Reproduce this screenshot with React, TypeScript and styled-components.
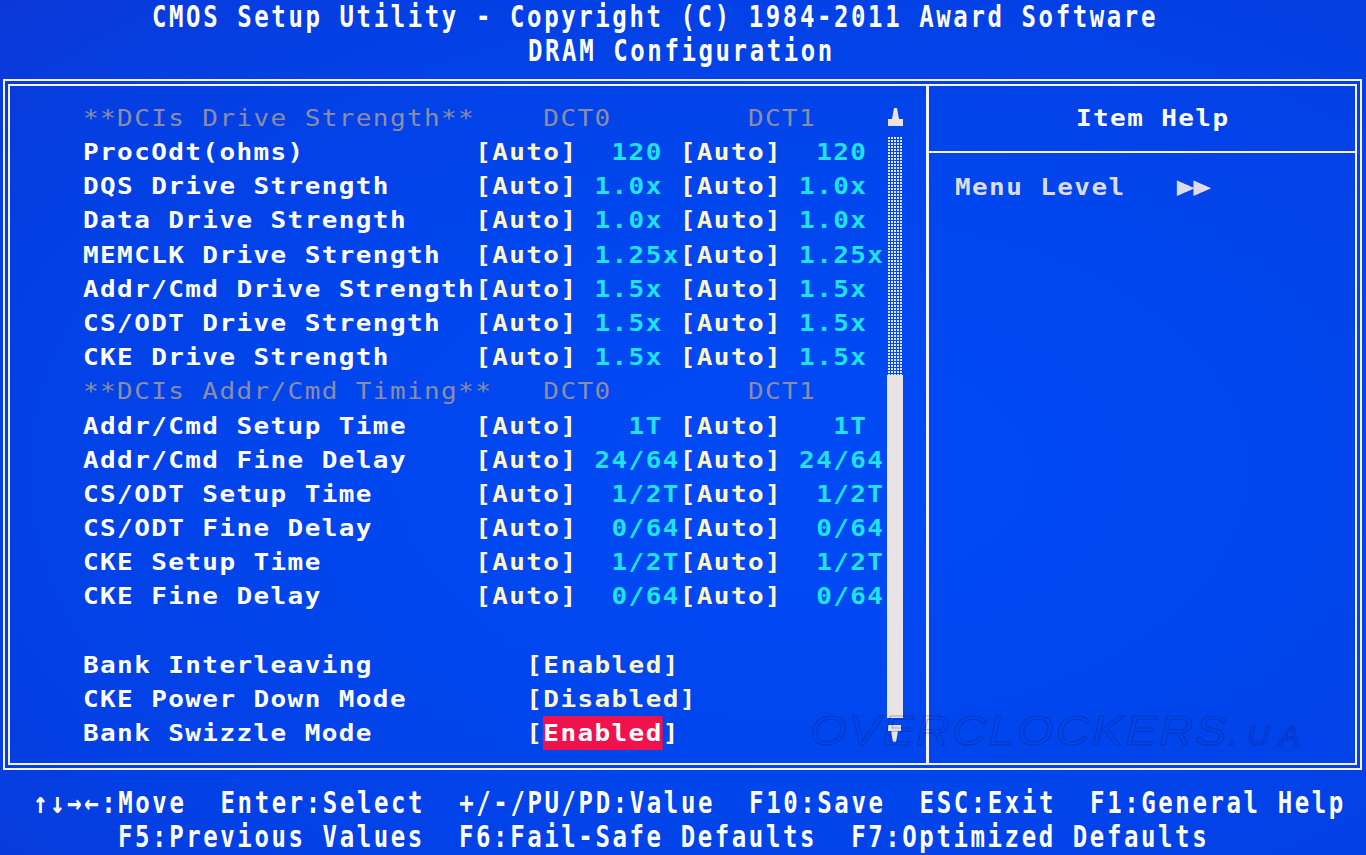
import React from 'react';
import styled, { createGlobalStyle } from 'styled-components';

const CELL = 17.05;
const ROW = 34.2;
const ADV = 0.60205;

const Global = createGlobalStyle`
  html, body {
    margin: 0;
    padding: 0;
    width: 1366px;
    height: 855px;
    overflow: hidden;
    background: #0a40e4;
  }
  #root { width: 1366px; height: 855px; }
`;

const Screen = styled.div`
  position: relative;
  width: 1366px;
  height: 855px;
  overflow: hidden;
  display: flex;
  flex-direction: column;
  font-family: "DejaVu Sans Mono", "Liberation Mono", monospace;
  background: radial-gradient(
    ellipse 85% 80% at 60% 55%,
    #004af6 0%,
    #0046ee 40%,
    #0340e4 75%,
    #0c38d8 100%
  );
`;

const Header = styled.div`
  display: flex;
  flex-direction: column;
`;

const Line = styled.div<{ $indent: number }>`
  flex: none;
  height: ${ROW}px;
  line-height: ${ROW}px;
  padding-left: ${(p) => p.$indent}px;
  white-space: pre;
`;

const Glyphs = styled.span<{ $size: number; $sx: number }>`
  display: inline-block;
  vertical-align: top;
  height: ${ROW}px;
  line-height: ${ROW}px;
  font-size: ${(p) => p.$size}px;
  font-weight: 700;
  letter-spacing: ${(p) => CELL / p.$sx - ADV * p.$size}px;
  transform: scaleX(${(p) => p.$sx});
  transform-origin: 0 50%;
  color: #ffffff;
`;

const TitleText = (props: { children: React.ReactNode }) => (
  <Glyphs $size={30} $sx={0.8}>{props.children}</Glyphs>
);

const ItemText = (props: { children: React.ReactNode }) => (
  <Glyphs $size={23} $sx={1.13}>{props.children}</Glyphs>
);

const Frame = styled.div`
  margin: 10.6px 0 0 3px;
  width: 1359px;
  box-sizing: border-box;
  border: 2px solid #f6f2fa;
  padding: 3px;
  flex: none;
`;

const Inner = styled.div`
  border: 2px solid #f6f2fa;
  height: 677px;
  display: flex;
`;

const LeftPanel = styled.div`
  flex: 0 0 919px;
  border-right: 3px solid #f6f2fa;
  display: flex;
  align-items: flex-start;
  padding-left: 73px;
  box-sizing: border-box;
`;

const ItemList = styled.div`
  width: 804px;
  padding-top: 14.9px;
  display: flex;
  flex-direction: column;
`;

const Label = styled.span`
  color: #ffffff;
`;
const Option = styled.span`
  color: #fff6c4;
`;
const Value = styled.span`
  color: #1ee2ee;
`;
const Dim = styled.span`
  color: #8c8ca8;
  font-weight: 400;
`;
const Selected = styled.span`
  display: inline-block;
  vertical-align: top;
  height: ${ROW}px;
  background: #f0124c;
  color: #ffffff;
`;
const HelpText = styled.span`
  color: #dcdce6;
`;
const HelpArrows = styled.span`
  color: #dcdce6;
  font-size: 26px;
  letter-spacing: -1px;
`;

const ScrollBar = styled.div`
  width: 16px;
  margin-top: 22px;
  display: flex;
  flex-direction: column;
  align-items: flex-start;
`;

const ArrowBox = styled.svg`
  display: block;
  margin-left: 1px;
  flex: none;
`;

const Track = styled.div`
  margin-top: 11px;
  width: 15px;
  height: 238px;
  margin-left: 1px;
  background-image: radial-gradient(circle at 1px 1px, rgba(236, 236, 255, 0.95) 0.9px, transparent 1.3px);
  background-size: 3px 3px;
`;

const Thumb = styled.div`
  width: 16px;
  height: 343px;
  background: #e9e3e6;
`;

const DownWrap = styled.div`
  margin-top: 7px;
`;

const RightPanel = styled.div`
  flex: 1;
  display: flex;
  flex-direction: column;
`;

const HelpHeader = styled.div`
  height: 65px;
  border-bottom: 2px solid #f6f2fa;
  display: flex;
  align-items: center;
`;

const HelpBody = styled.div`
  margin-top: 16px;
`;

const Footer = styled.div`
  margin-top: 15.9px;
  display: flex;
  flex-direction: column;
`;

const Watermark = styled.div`
  position: absolute;
  left: 810px;
  top: 709px;
  font-family: "Liberation Sans", Arial, sans-serif;
  font-style: italic;
  font-weight: 400;
  font-size: 42px;
  line-height: 44px;
  letter-spacing: 2px;
  color: transparent;
  -webkit-text-stroke: 1px rgba(4, 22, 120, 0.35);
  transform: scaleX(1.12);
  transform-origin: left top;
  white-space: nowrap;
  pointer-events: none;
`;

const WatermarkSmall = styled.span`
  font-size: 27px;
  letter-spacing: 9px;
`;

type Kind = 'l' | 'o' | 'v' | 'd' | 's';
type Seg = [string, Kind];

const auto = (label: string, v1: string, v2: string): Seg[] => [
  [label.padEnd(23), 'l'],
  ['[Auto]', 'o'],
  [v1, 'v'],
  ['[Auto]', 'o'],
  [v2, 'v'],
];

const rows: Seg[][] = [
  [['**DCIs Drive Strength**    DCT0        DCT1', 'd']],
  auto('ProcOdt(ohms)', '  120 ', '  120'),
  auto('DQS Drive Strength', ' 1.0x ', ' 1.0x'),
  auto('Data Drive Strength', ' 1.0x ', ' 1.0x'),
  auto('MEMCLK Drive Strength', ' 1.25x', ' 1.25x'),
  auto('Addr/Cmd Drive Strength', ' 1.5x ', ' 1.5x'),
  auto('CS/ODT Drive Strength', ' 1.5x ', ' 1.5x'),
  auto('CKE Drive Strength', ' 1.5x ', ' 1.5x'),
  [['**DCIs Addr/Cmd Timing**   DCT0        DCT1', 'd']],
  auto('Addr/Cmd Setup Time', '   1T ', '   1T'),
  auto('Addr/Cmd Fine Delay', ' 24/64', ' 24/64'),
  auto('CS/ODT Setup Time', '  1/2T', '  1/2T'),
  auto('CS/ODT Fine Delay', '  0/64', '  0/64'),
  auto('CKE Setup Time', '  1/2T', '  1/2T'),
  auto('CKE Fine Delay', '  0/64', '  0/64'),
  [],
  [
    ['Bank Interleaving'.padEnd(26), 'l'],
    ['[Enabled]', 'o'],
  ],
  [
    ['CKE Power Down Mode'.padEnd(26), 'l'],
    ['[Disabled]', 'o'],
  ],
  [
    ['Bank Swizzle Mode'.padEnd(26), 'l'],
    ['[', 'o'],
    ['Enabled', 's'],
    [']', 'o'],
  ],
];

const renderSeg = ([text, kind]: Seg, i: number) => {
  switch (kind) {
    case 'l':
      return <Label key={i}>{text}</Label>;
    case 'o':
      return <Option key={i}>{text}</Option>;
    case 'v':
      return <Value key={i}>{text}</Value>;
    case 'd':
      return <Dim key={i}>{text}</Dim>;
    default:
      return <Selected key={i}>{text}</Selected>;
  }
};

const UpArrow = () => (
  <ArrowBox width="15" height="18" viewBox="0 0 15 18">
    <path d="M6 0 H9 L11 11 H15 V18 H0 V11 H4 Z" fill="#e9e3e6" />
  </ArrowBox>
);

const DownArrow = () => (
  <ArrowBox width="13" height="17" viewBox="0 0 13 17">
    <path d="M0 0 H13 V6 H10 L8 17 H5 L3 6 H0 Z" fill="#e9e3e6" />
  </ArrowBox>
);

export default function App() {
  return (
    <>
      <Global />
      <Screen>
        <Header>
          <Line $indent={152}>
            <TitleText>CMOS Setup Utility - Copyright (C) 1984-2011 Award Software</TitleText>
          </Line>
          <Line $indent={528}>
            <TitleText>DRAM Configuration</TitleText>
          </Line>
        </Header>

        <Frame>
          <Inner>
            <LeftPanel>
              <ItemList>
                {rows.map((segs, r) => (
                  <Line $indent={0} key={r}>
                    <ItemText>{segs.map(renderSeg)}</ItemText>
                  </Line>
                ))}
              </ItemList>
              <ScrollBar>
                <UpArrow />
                <Track />
                <Thumb />
                <DownWrap>
                  <DownArrow />
                </DownWrap>
              </ScrollBar>
            </LeftPanel>
            <RightPanel>
              <HelpHeader>
                <Line $indent={147}>
                  <ItemText>Item Help</ItemText>
                </Line>
              </HelpHeader>
              <HelpBody>
                <Line $indent={26}>
                  <ItemText>
                    <HelpText>Menu Level   </HelpText>
                    <HelpArrows>▶▶</HelpArrows>
                  </ItemText>
                </Line>
              </HelpBody>
            </RightPanel>
          </Inner>
        </Frame>

        <Footer>
          <Line $indent={33}>
            <TitleText>↑↓→←:Move  Enter:Select  +/-/PU/PD:Value  F10:Save  ESC:Exit  F1:General Help</TitleText>
          </Line>
          <Line $indent={118.25}>
            <TitleText>F5:Previous Values  F6:Fail-Safe Defaults  F7:Optimized Defaults</TitleText>
          </Line>
        </Footer>

        <Watermark>
          OVERCLOCKERS<WatermarkSmall>.UA</WatermarkSmall>
        </Watermark>
      </Screen>
    </>
  );
}
